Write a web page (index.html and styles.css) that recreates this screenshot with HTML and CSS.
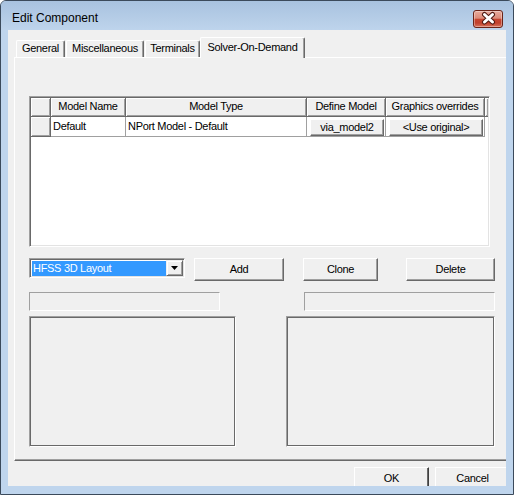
FILE: index.html
```html
<!DOCTYPE html>
<html>
<head>
<meta charset="utf-8">
<title>Edit Component</title>
<link rel="stylesheet" href="styles.css">
</head>
<body>
<div class="window">
  <div class="titlebar">
    <span class="title">Edit Component</span>
    <div class="close">
      <svg width="28" height="16" viewBox="0 0 28 16">
        <path d="M10.5 3.5 L18.5 11 M18.5 3.5 L10.5 11" stroke="#4f1a12" stroke-width="5" stroke-linecap="round"/>
        <path d="M10.5 3.5 L18.5 11 M18.5 3.5 L10.5 11" stroke="#ffffff" stroke-width="3" stroke-linecap="round"/>
      </svg>
    </div>
  </div>
  <div class="client">
    <div class="tabs">
      <div class="tab tab-general">General</div>
      <div class="tab tab-misc">Miscellaneous</div>
      <div class="tab tab-term">Terminals</div>
      <div class="tab tab-active tab-solver">Solver-On-Demand</div>
    </div>
    <div class="panel">
      <div class="grid">
        <div class="hc"></div>
        <div class="hc">Model Name</div>
        <div class="hc">Model Type</div>
        <div class="hc">Define Model</div>
        <div class="hc">Graphics overrides</div>
        <div class="hc hc-end"></div>
        <div class="hc rowhead"></div>
        <div class="dc">Default</div>
        <div class="dc">NPort Model - Default</div>
        <div class="dc btncell"><div class="cellbtn">via_model2</div></div>
        <div class="dc btncell"><div class="cellbtn">&lt;Use original&gt;</div></div>
        <div class="dc-end"></div>
      </div>
      <div class="controls">
        <div class="combo">
          <div class="sel">HFSS 3D Layout</div>
          <div class="drop">
            <svg width="7" height="4" viewBox="0 0 7 4"><polygon points="0,0 7,0 3.5,4" fill="#000"/></svg>
          </div>
        </div>
        <div class="btn btn-add">Add</div>
        <div class="btn btn-clone">Clone</div>
        <div class="btn btn-delete">Delete</div>
      </div>
      <div class="fields">
        <div class="field"></div>
        <div class="field field-right"></div>
      </div>
      <div class="boxes">
        <div class="box box-left"></div>
        <div class="box box-right"></div>
      </div>
    </div>
    <div class="footer">
      <div class="btn btn-foot btn-default">OK</div>
      <div class="btn btn-foot">Cancel</div>
    </div>
  </div>
</div>
</body>
</html>
```

FILE: styles.css
```css
* { box-sizing: border-box; }
html, body { margin: 0; padding: 0; background: #ffffff; }
body {
  font-family: "Liberation Sans", Arial, sans-serif;
  font-size: 11px;
  letter-spacing: -0.3px;
  color: #000;
}
.window {
  width: 514px;
  height: 495px;
  border: 1px solid #3b4a5b;
  border-radius: 6px 6px 0 0;
  background: #bfd5ed;
  display: flex;
  flex-direction: column;
  overflow: hidden;
}
.titlebar {
  flex: none;
  height: 29px;
  display: flex;
  justify-content: space-between;
  align-items: flex-start;
  padding: 0 10px 0 11px;
  background: linear-gradient(#a8c2df, #bed4ec);
}
.title {
  font-size: 12px;
  letter-spacing: 0;
  line-height: 15px;
  margin-top: 10px;
  color: #000;
}
.close {
  width: 30px;
  height: 18px;
  margin-top: 9px;
  border: 1px solid #6a2418;
  border-radius: 3px;
  background: linear-gradient(#e8ab9d 0%, #dc8b79 45%, #c6452f 52%, #c1412d 75%, #d8735b 100%);
  box-shadow: inset 0 0 0 1px rgba(255,255,255,0.35);
}
.close svg { display: block; }
.client {
  flex: none;
  height: 456px;
  margin: 0 7px;
  background: #f0f0f0;
  overflow: hidden;
}
.tabs {
  display: flex;
  align-items: flex-end;
  gap: 1px;
  height: 27px;
  padding: 7px 0 0 8px;
}
.tab {
  height: 17px;
  border-top: 1px solid #ffffff;
  border-left: 1px solid #ffffff;
  border-right: 1px solid #696969;
  box-shadow: inset -1px 0 #a0a0a0;
  border-radius: 2px 2px 0 0;
  background: #f0f0f0;
  line-height: 15px;
  text-align: center;
  white-space: nowrap;
}
.tab-general { width: 49px; }
.tab-misc { width: 78px; }
.tab-term { width: 55px; }
.tab-solver { width: 105px; margin-left: -1px; }
.tab-active {
  height: 21px;
  line-height: 18px;
  margin-bottom: -1px;
  position: relative;
  z-index: 1;
}
.panel {
  margin-left: 6px;
  width: 520px;
  height: 404px;
  border-top: 1px solid #ffffff;
  border-left: 1px solid #ffffff;
  border-bottom: 1px solid #696969;
  box-shadow: inset 0 -1px #a0a0a0;
  padding: 38px 0 0 14px;
}
.grid {
  width: 461px;
  height: 151px;
  border: 1px solid;
  border-color: #a0a0a0 #ffffff #ffffff #a0a0a0;
  box-shadow: inset 1px 1px #696969, inset -1px -1px #e3e3e3;
  background: #ffffff;
  padding: 1px;
  display: grid;
  grid-template-columns: 20px 75px 181px 79px 99px 1fr;
  grid-template-rows: 19px 20px;
  align-content: start;
}
.hc {
  background: #f0f0f0;
  border-right: 1px solid #696969;
  border-bottom: 1px solid #696969;
  box-shadow: inset 1px 1px #ffffff, inset -1px -1px #a0a0a0;
  text-align: center;
  line-height: 17px;
  white-space: nowrap;
  overflow: hidden;
}
.hc-end { border-right: none; }
.rowhead { line-height: 19px; }
.dc {
  background: #ffffff;
  border-right: 1px solid #a0a0a0;
  border-bottom: 1px solid #a0a0a0;
  padding-left: 2px;
  line-height: 19px;
  white-space: nowrap;
  overflow: hidden;
}
.btncell { padding: 2px 1px 0 3px; }
.cellbtn {
  height: 17px;
  border: 1px solid;
  border-color: #ffffff #696969 #696969 #ffffff;
  box-shadow: inset -1px -1px #a0a0a0;
  background: #f0f0f0;
  text-align: center;
  line-height: 14px;
}
.dc-end { background: #ffffff; }
.controls {
  display: flex;
  align-items: flex-start;
  margin-top: 11px;
}
.combo {
  width: 156px;
  height: 20px;
  border: 1px solid;
  border-color: #a0a0a0 #ffffff #ffffff #a0a0a0;
  box-shadow: inset 1px 1px #696969, inset -1px -1px #e3e3e3;
  background: #ffffff;
  padding: 1px;
  display: flex;
  align-items: flex-start;
}
.sel {
  width: 134px;
  height: 15px;
  margin: 1px 0 0 1px;
  background: #3399ff;
  color: #ffffff;
  padding-left: 1px;
  line-height: 15px;
  white-space: nowrap;
}
.drop {
  width: 17px;
  height: 16px;
  border: 1px solid;
  border-color: #f0f0f0 #696969 #696969 #f0f0f0;
  box-shadow: inset 1px 1px #ffffff, inset -1px -1px #a0a0a0;
  background: #f0f0f0;
  display: flex;
  align-items: center;
  justify-content: center;
}
.drop svg { display: block; }
.btn {
  height: 23px;
  border: 1px solid;
  border-color: #ffffff #696969 #696969 #ffffff;
  box-shadow: inset -1px -1px #a0a0a0;
  background: #f0f0f0;
  text-align: center;
  line-height: 21px;
  white-space: nowrap;
}
.btn-add { width: 90px; margin-left: 9px; }
.btn-clone { width: 75px; margin-left: 19px; }
.btn-delete { width: 89px; margin-left: 28px; }
.fields {
  display: flex;
  margin-top: 11px;
}
.field {
  width: 191px;
  height: 19px;
  border: 1px solid;
  border-color: #a0a0a0 #ffffff #ffffff #a0a0a0;
  background: #f0f0f0;
}
.field-right { margin-left: 84px; }
.boxes {
  display: flex;
  margin-top: 5px;
}
.box {
  height: 131px;
  border: 1px solid;
  border-color: #a0a0a0 #ffffff #ffffff #a0a0a0;
  box-shadow: inset 0 0 0 1px #696969;
  background: #f0f0f0;
}
.box-left { width: 207px; }
.box-right { width: 209px; margin-left: 50px; }
.footer {
  display: flex;
  gap: 6px;
  margin: 6px 0 0 346px;
}
.btn-foot { width: 75px; flex: none; }
.btn-default {
  border-color: #ffffff #404040 #404040 #ffffff;
  box-shadow: inset -1px -1px #696969;
}
```
